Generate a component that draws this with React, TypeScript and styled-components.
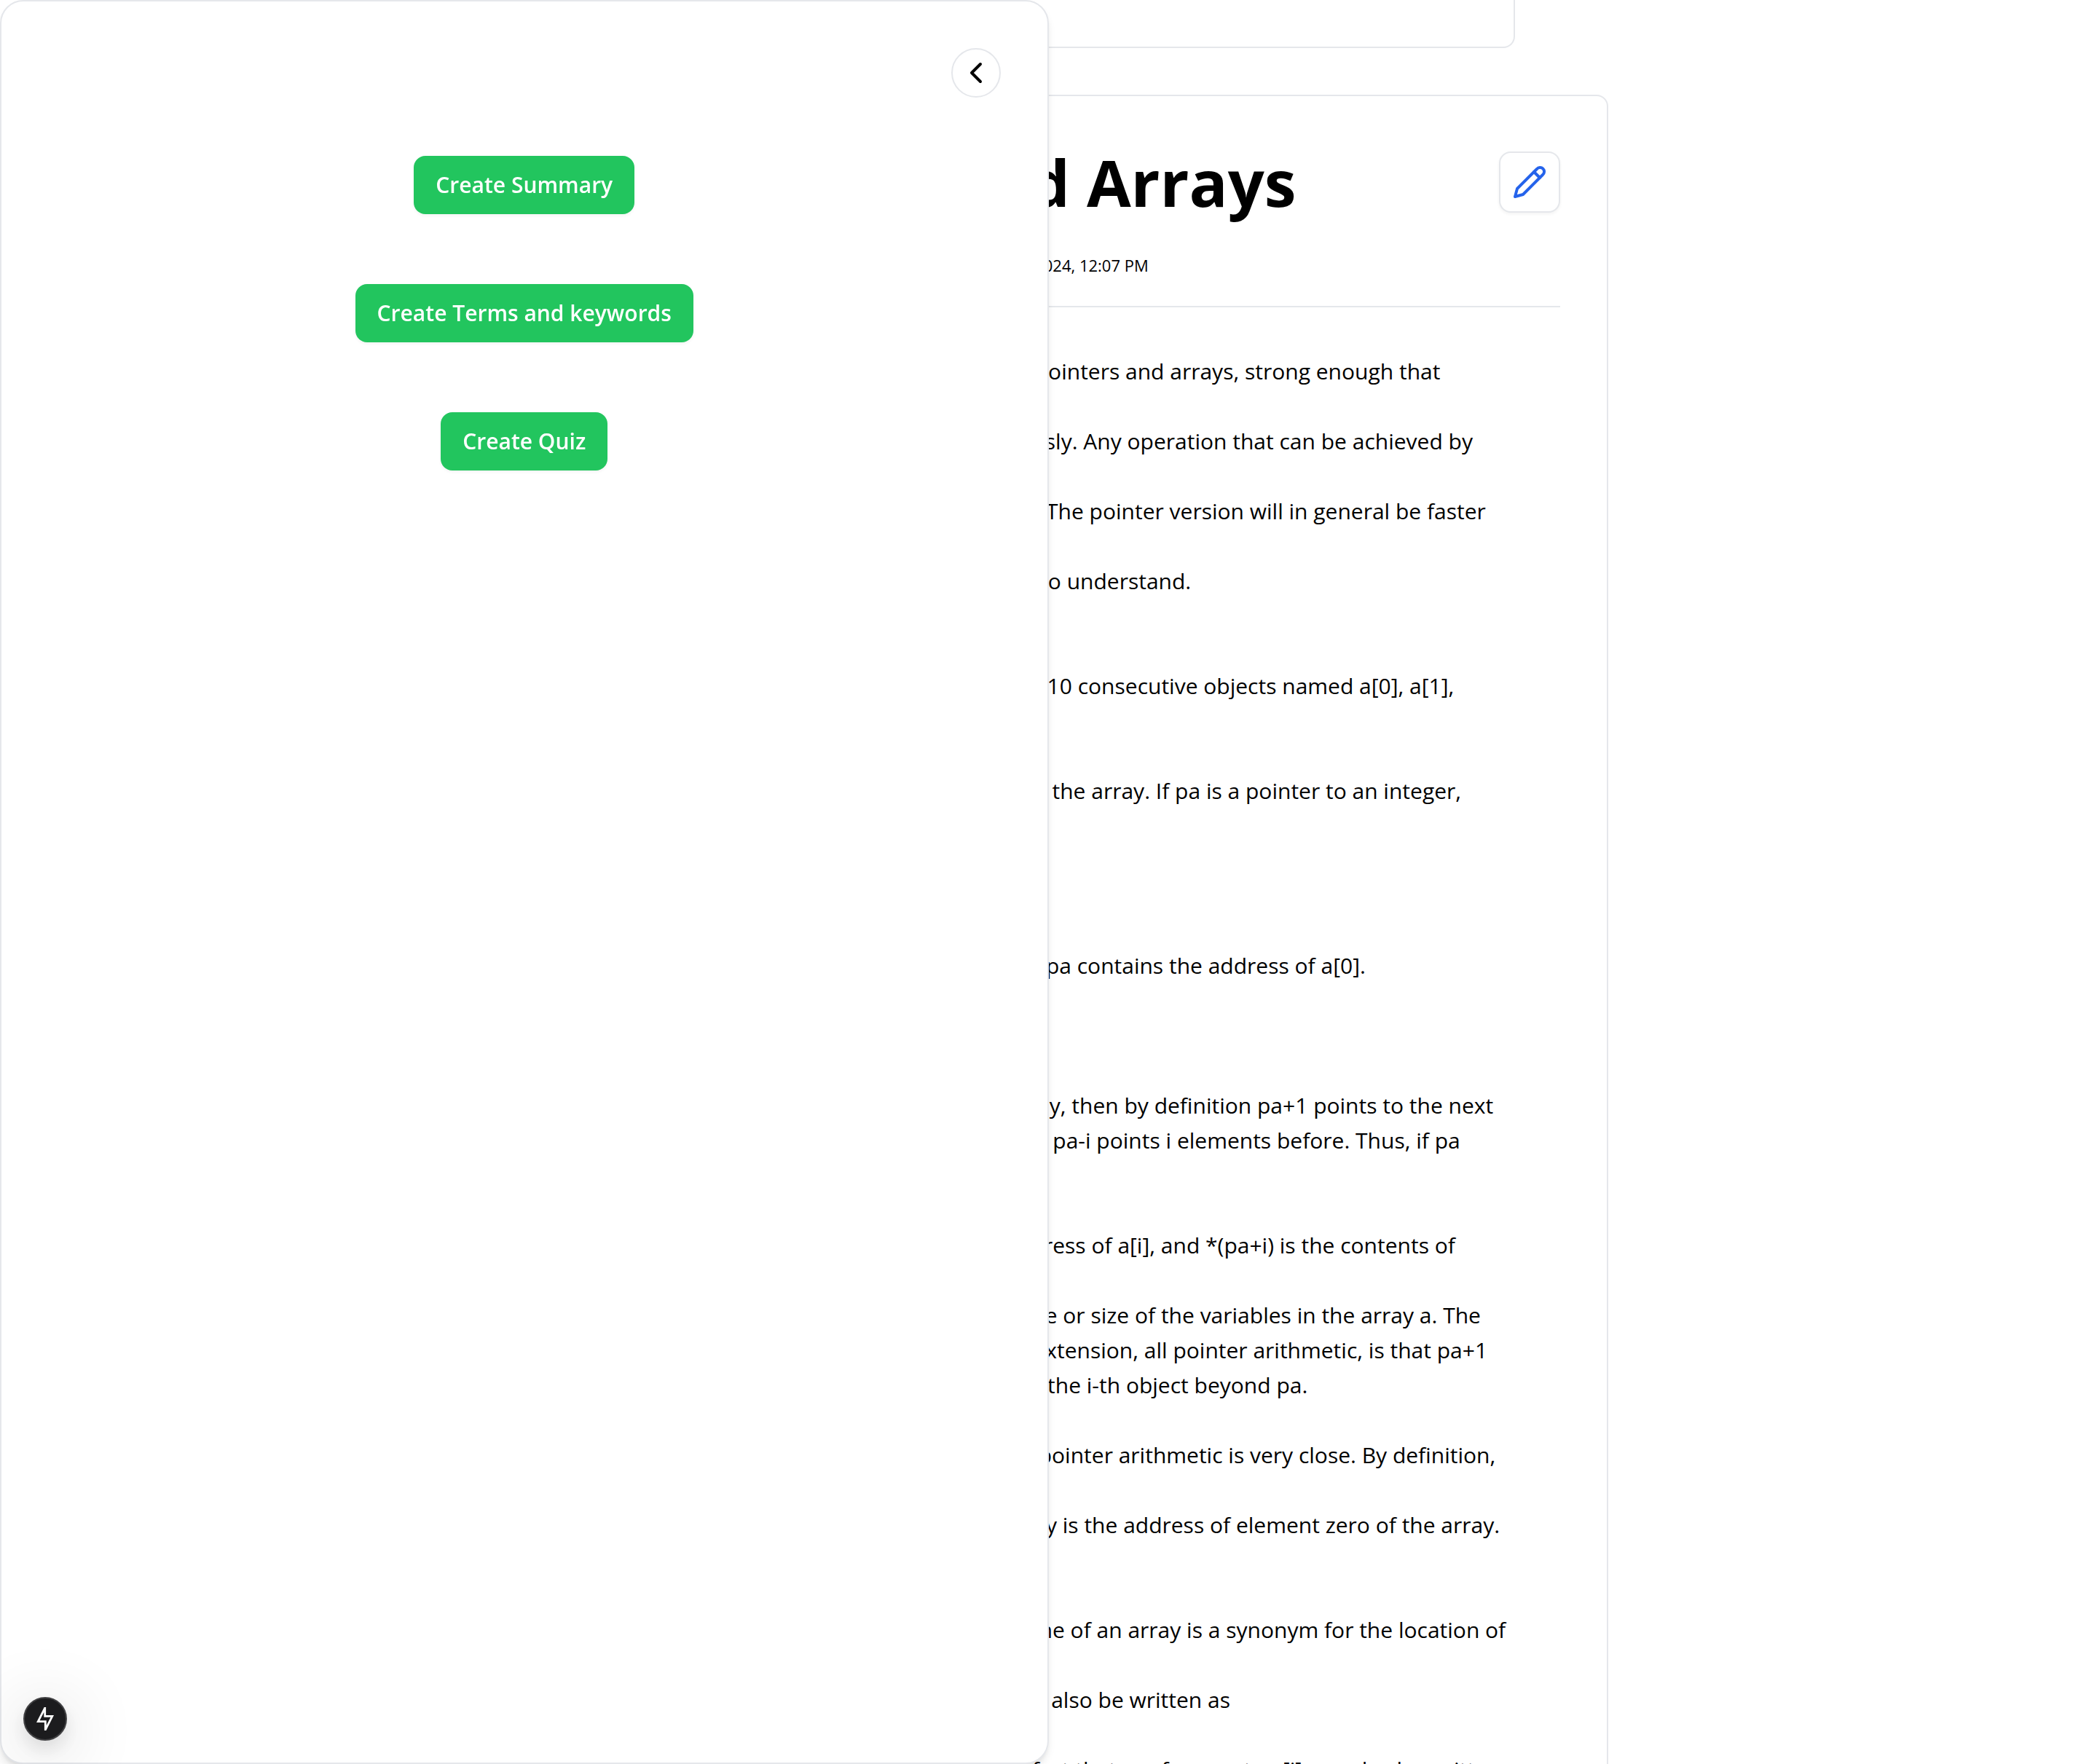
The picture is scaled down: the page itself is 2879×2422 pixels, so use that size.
import React from "react";
import styled, { createGlobalStyle } from "styled-components";
import { ChevronLeft } from "lucide-react";

const GlobalStyle = createGlobalStyle`
  *, *::before, *::after {
    box-sizing: border-box;
  }

  body {
    margin: 0;
    background: #ffffff;
    color: #000000;
    font-family: "Open Sans", "Noto Sans", sans-serif;
  }

  h1, p {
    margin: 0;
  }

  button {
    font: inherit;
    cursor: pointer;
  }
`;

const Page = styled.div`
  height: 100vh;
  overflow: hidden;
`;

const Main = styled.main`
  display: flex;
  flex-direction: column;
  align-items: center;
  gap: 64px;
`;

const UploadCard = styled.section`
  width: 100%;
  max-width: 1280px;
  height: 66px;
  border: 2px solid #e5e7eb;
  border-top: 0;
  border-radius: 0 0 16px 16px;
`;

const NoteCard = styled.article`
  width: 100%;
  max-width: 1536px;
  padding: 64px;
  border: 2px solid #e5e7eb;
  border-radius: 16px;
`;

const NoteHeader = styled.header`
  display: flex;
  flex-direction: column;
  gap: 44px;
  padding-bottom: 40px;
  border-bottom: 2px solid #e5e7eb;
`;

const TitleRow = styled.div`
  display: flex;
  align-items: center;
  justify-content: space-between;
`;

const Title = styled.h1`
  font-size: 88px;
  line-height: 108px;
  font-weight: 700;
`;

const EditButton = styled.button`
  display: grid;
  place-items: center;
  width: 84px;
  height: 84px;
  padding: 0;
  border: 2px solid #e5e7eb;
  border-radius: 16px;
  background: #ffffff;
  color: #2563eb;
  box-shadow: 0 2px 4px rgba(0, 0, 0, 0.05);
`;

const Dates = styled.div`
  display: flex;
  gap: 32px;
  font-size: 22px;
  line-height: 32px;
`;

const NoteBody = styled.p`
  padding: 64px 0 64px 76px;
  font-size: 30px;
  line-height: 48px;
  white-space: pre-wrap;
`;

const Drawer = styled.aside`
  position: fixed;
  top: 0;
  left: 0;
  display: flex;
  flex-direction: column;
  gap: 80px;
  width: 50%;
  height: 100vh;
  padding: 64px;
  border: 2px solid #e5e7eb;
  border-radius: 32px;
  background: #ffffff;
  box-shadow: 0 8px 12px -2px rgba(0, 0, 0, 0.1), 0 4px 8px -4px rgba(0, 0, 0, 0.1);
`;

const CloseButton = styled.button`
  display: grid;
  place-items: center;
  align-self: flex-end;
  width: 68px;
  height: 68px;
  padding: 0;
  border: 2px solid #e5e7eb;
  border-radius: 50%;
  background: #ffffff;
  color: #000000;
`;

const Actions = styled.div`
  display: flex;
  flex-direction: column;
  align-items: center;
  gap: 96px;
`;

const ActionButton = styled.button`
  padding: 16px 30px;
  border: 0;
  border-radius: 16px;
  background: #22c55e;
  color: #ffffff;
  font-size: 30px;
  line-height: 48px;
  font-weight: 600;
  box-shadow: 0 2px 4px rgba(0, 0, 0, 0.05);
`;

const DevIndicator = styled.button`
  position: fixed;
  bottom: 32px;
  left: 32px;
  display: grid;
  place-items: center;
  width: 60px;
  height: 60px;
  padding: 0;
  border: 2px solid #414143;
  border-radius: 50%;
  background: #1c1c1e;
  color: #ffffff;
  box-shadow: 0 12px 24px rgba(0, 0, 0, 0.1), 0 16px 96px 10px rgba(0, 0, 0, 0.14);
`;

const noteText = `In C, there is a strong relationship between pointers and arrays, strong enough that
pointers
and arrays should be discussed simultaneously. Any operation that can be achieved by
array
subscripting can also be done with pointers. The pointer version will in general be faster
but,
at least to the uninitiated somewhat harder to understand.

The declaration int a[10];
defines an array of size 10, that is, a block of 10 consecutive objects named a[0], a[1],
..., a[9].

The notation a[i] refers to the i-th element of the array. If pa is a pointer to an integer,
declared as
int *pa;
then the assignment
pa = &a[0];
sets pa to point to element zero of a; that is, pa contains the address of a[0].
Now the assignment
x = *pa;
will copy the contents of a[0] into x.
If pa points to a particular element of an array, then by definition pa+1 points to the next
element, pa+i points i elements after pa, and pa-i points i elements before. Thus, if pa
points to a[0],
*(pa+1)
refers to the contents of a[1], pa+i is the address of a[i], and *(pa+i) is the contents of
a[i].
These remarks are true regardless of the type or size of the variables in the array a. The
meaning of \`\`adding 1 to a pointer,'' and by extension, all pointer arithmetic, is that pa+1
points to the next object,  and pa+i points to the i-th object beyond pa.

The correspondence between indexing and pointer arithmetic is very close. By definition,
the
value of a variable or expression of type array is the address of element zero of the array.
Thus after the assignment
pa = &a[0];
pa and a have identical values. Since the name of an array is a synonym for the location of
the
initial element, the assignment pa=&a[0] can also be written as
pa = a;
Rather more surprising, at first sight, is the fact that a reference to a[i] can also be written
as *(a+i).`;

const PencilIcon = () => (
  <svg
    width="48"
    height="48"
    viewBox="0 0 24 24"
    fill="none"
    stroke="currentColor"
    strokeWidth="2"
    strokeLinecap="round"
    strokeLinejoin="round"
    aria-hidden="true"
  >
    <path d="M17 3a2.85 2.83 0 1 1 4 4L7.5 20.5 2 22l1.5-5.5Z" />
    <path d="m15 5 4 4" />
  </svg>
);

const BoltIcon = () => (
  <svg
    width="24"
    height="32"
    viewBox="0 0 24 32"
    fill="none"
    stroke="currentColor"
    strokeWidth="2.8"
    strokeMiterlimit="10"
    aria-hidden="true"
  >
    <path d="M11.7 1V12.3H21.8L12.3 31V19.7H2.2Z" />
  </svg>
);

export default function App() {
  return (
    <Page>
      <GlobalStyle />
      <Main>
        <UploadCard aria-label="Upload" />
        <NoteCard>
          <NoteHeader>
            <TitleRow>
              <Title>5.3. Pointers and Arrays</Title>
              <EditButton type="button" aria-label="Edit note">
                <PencilIcon />
              </EditButton>
            </TitleRow>
            <Dates>
              <span>Created: November 17, 2024, 12:05 PM</span>
              <span>Updated: November 17, 2024, 12:07 PM</span>
            </Dates>
          </NoteHeader>
          <NoteBody>{noteText}</NoteBody>
        </NoteCard>
      </Main>

      <Drawer>
        <CloseButton type="button" aria-label="Close panel">
          <ChevronLeft size={48} aria-hidden="true" />
        </CloseButton>
        <Actions>
          <ActionButton type="button">Create Summary</ActionButton>
          <ActionButton type="button">Create Terms and keywords</ActionButton>
          <ActionButton type="button">Create Quiz</ActionButton>
        </Actions>
      </Drawer>

      <DevIndicator type="button" aria-label="Open developer tools">
        <BoltIcon />
      </DevIndicator>
    </Page>
  );
}
